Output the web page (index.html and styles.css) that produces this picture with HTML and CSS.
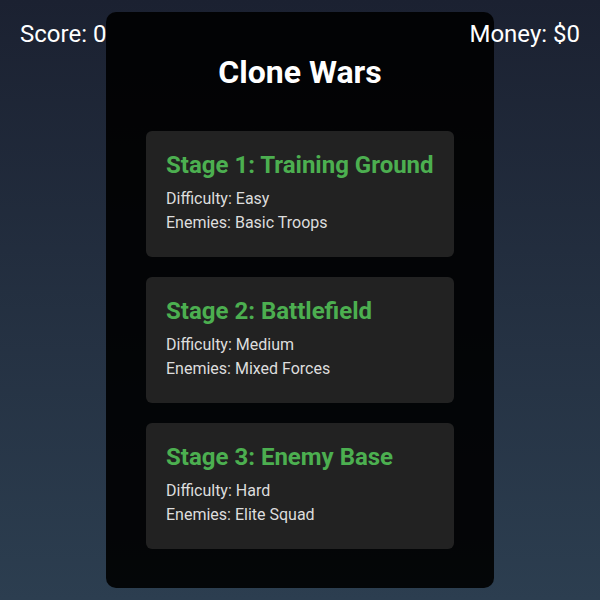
FILE: index.html
```html
<!DOCTYPE html>
<html>
<head>
<meta charset="utf-8">
<link rel="stylesheet" href="styles.css">
</head>
<body>
<div class="hud">
  <div class="hud-item">Score: 0</div>
  <div class="hud-item">Money: $0</div>
</div>
<div class="modal">
  <h1 class="modal-title">Clone Wars</h1>
  <div class="stages">
    <div class="stage">
      <h2 class="stage-title">Stage 1: Training Ground</h2>
      <p class="stage-info">Difficulty: Easy</p>
      <p class="stage-info">Enemies: Basic Troops</p>
    </div>
    <div class="stage">
      <h2 class="stage-title">Stage 2: Battlefield</h2>
      <p class="stage-info">Difficulty: Medium</p>
      <p class="stage-info">Enemies: Mixed Forces</p>
    </div>
    <div class="stage">
      <h2 class="stage-title">Stage 3: Enemy Base</h2>
      <p class="stage-info">Difficulty: Hard</p>
      <p class="stage-info">Enemies: Elite Squad</p>
    </div>
  </div>
</div>
</body>
</html>
```
FILE: styles.css
```css
html, body {
  margin: 0;
  padding: 0;
  height: 100%;
}
body {
  background: linear-gradient(to bottom, #1b2131, #2c3e50);
  font-family: Roboto, "Liberation Sans", sans-serif;
  color: #fff;
  overflow: hidden;
  position: relative;
}
.hud {
  position: relative;
  z-index: 2;
  display: flex;
  justify-content: space-between;
  padding: 20px 20px 0 20px;
}
.hud-item {
  font-size: 24px;
  line-height: 28px;
}
.modal {
  position: absolute;
  z-index: 1;
  left: 106px;
  top: 12px;
  width: 388px;
  height: 576px;
  box-sizing: border-box;
  padding: 40px;
  background: rgba(0, 0, 0, 0.9);
  border-radius: 10px;
}
.modal-title {
  margin: 0;
  text-align: center;
  font-size: 32px;
  line-height: 40px;
  font-weight: 700;
}
.stages {
  display: flex;
  flex-direction: column;
  gap: 20px;
  margin-top: 39px;
}
.stage {
  background: #222;
  border-radius: 6px;
  padding: 20px;
  height: 126px;
  box-sizing: border-box;
}
.stage-title {
  margin: 0 0 8px 0;
  color: #4caf50;
  font-size: 24px;
  line-height: 28px;
  font-weight: 700;
}
.stage-info {
  margin: 0;
  color: #ddd;
  font-size: 16px;
  line-height: 24px;
}
```
